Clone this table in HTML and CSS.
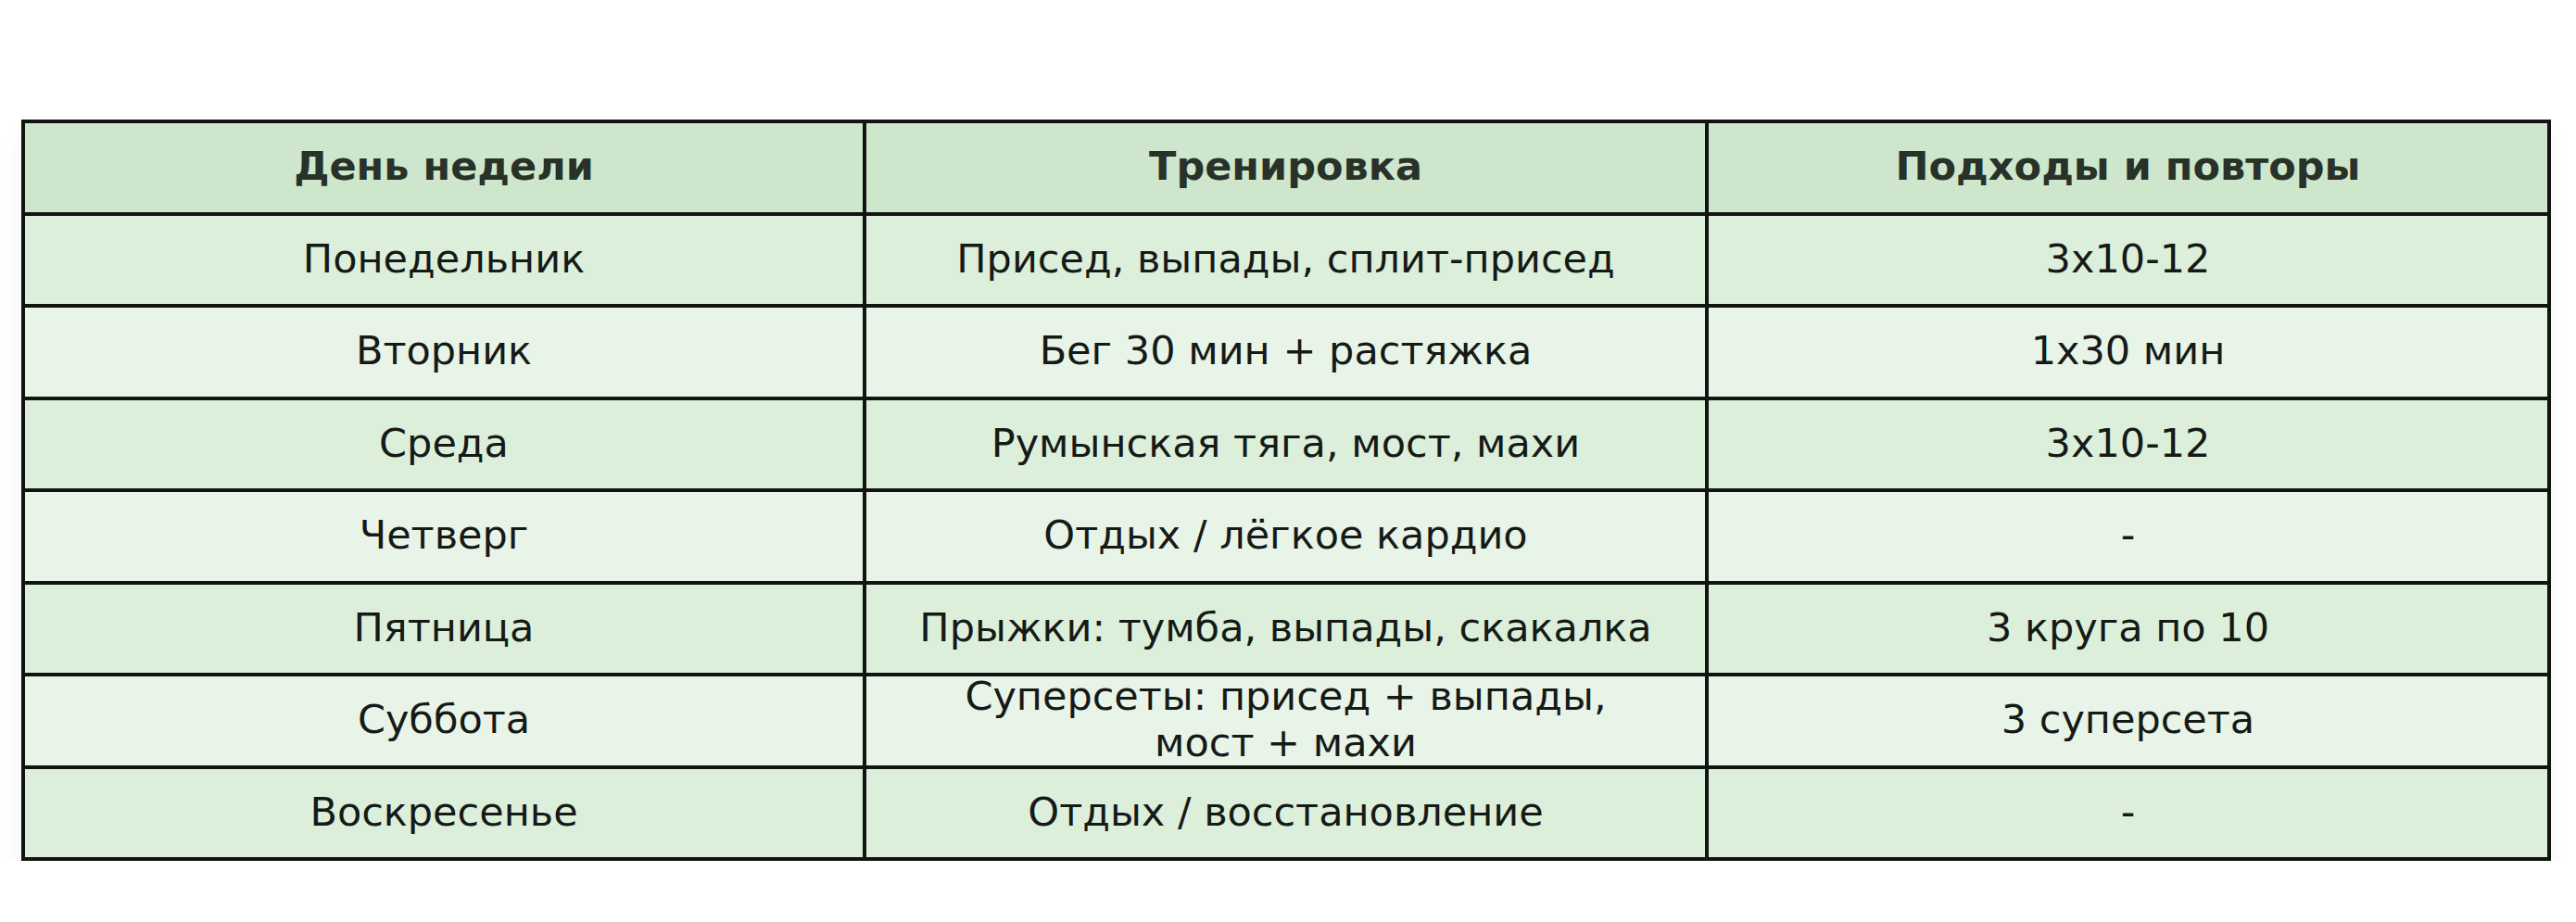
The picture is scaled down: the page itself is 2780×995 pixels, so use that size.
FILE: index.html
```html
<!DOCTYPE html>
<html lang="ru">
<head>
<meta charset="utf-8">
<title>План тренировок</title>
<link rel="stylesheet" href="styles.css">
</head>
<body>
<main class="page">
  <div class="schedule" role="table">
    <div class="cell head" role="columnheader">День недели</div>
    <div class="cell head" role="columnheader">Тренировка</div>
    <div class="cell head" role="columnheader">Подходы и повторы</div>

    <div class="cell odd">Понедельник</div>
    <div class="cell odd">Присед, выпады, сплит-присед</div>
    <div class="cell odd">3x10-12</div>

    <div class="cell even">Вторник</div>
    <div class="cell even">Бег 30 мин + растяжка</div>
    <div class="cell even">1x30 мин</div>

    <div class="cell odd">Среда</div>
    <div class="cell odd">Румынская тяга, мост, махи</div>
    <div class="cell odd">3x10-12</div>

    <div class="cell even">Четверг</div>
    <div class="cell even">Отдых / лёгкое кардио</div>
    <div class="cell even">-</div>

    <div class="cell odd">Пятница</div>
    <div class="cell odd">Прыжки: тумба, выпады, скакалка</div>
    <div class="cell odd">3 круга по 10</div>

    <div class="cell even">Суббота</div>
    <div class="cell even">Суперсеты: присед + выпады,<br>мост + махи</div>
    <div class="cell even">3 суперсета</div>

    <div class="cell odd">Воскресенье</div>
    <div class="cell odd">Отдых / восстановление</div>
    <div class="cell odd">-</div>
  </div>
</main>
</body>
</html>
```

FILE: styles.css
```css
html, body {
  margin: 0;
  padding: 0;
  background: #ffffff;
}

.page {
  padding: 129px 0 0 23px;
  font-family: "DejaVu Sans", "Noto Sans", sans-serif;
}

.schedule {
  display: grid;
  grid-template-columns: 904px 905px 905px;
  grid-auto-rows: 95.5px;
  gap: 4px;
  padding: 4px;
  width: 2722px;
  background: #121412;
  box-shadow: 0 14px 22px rgba(0, 0, 0, 0.05);
}

.cell {
  display: flex;
  align-items: center;
  justify-content: center;
  text-align: center;
  font-size: 43px;
  line-height: 1.17;
  color: #161a17;
  padding-bottom: 3px;
}

.head {
  background: #cee6cc;
  font-weight: bold;
  font-size: 43px;
  color: #283229;
  padding-bottom: 4px;
}

.odd {
  background: #dcefdb;
}

.even {
  background: #e8f4e8;
}
```
